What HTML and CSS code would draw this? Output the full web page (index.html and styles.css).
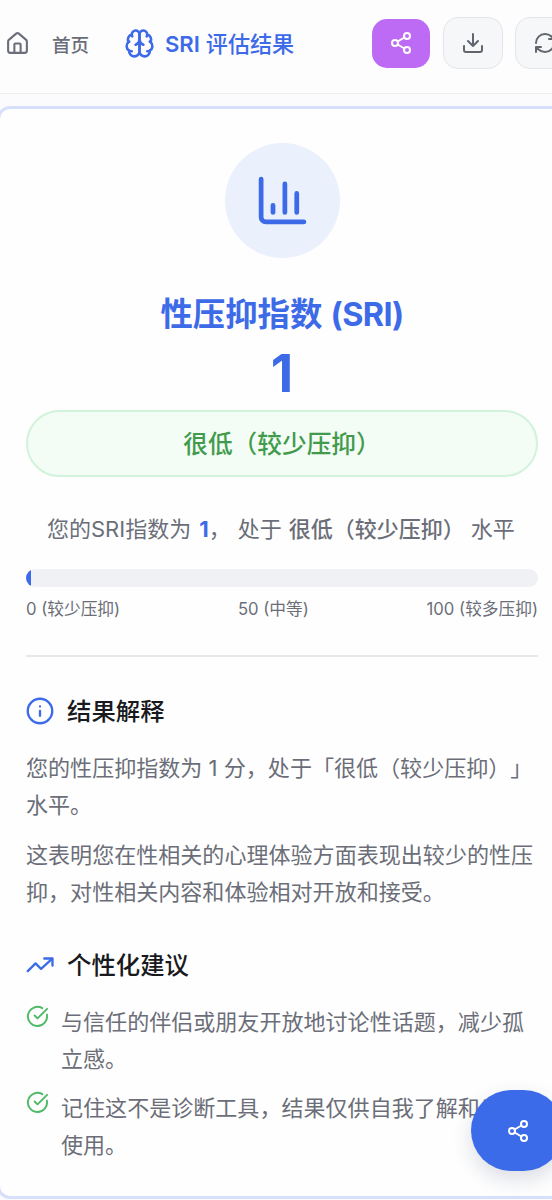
FILE: index.html
```html
<!DOCTYPE html>
<html lang="zh-CN">
<head>
<meta charset="utf-8">
<meta name="viewport" content="width=device-width, initial-scale=1">
<title>SRI 评估结果</title>
<link rel="stylesheet" href="styles.css">
</head>
<body>
<svg class="defs" aria-hidden="true">
  <symbol id="share" viewBox="0 0 24 24"><circle cx="18" cy="5" r="3"/><circle cx="6" cy="12" r="3"/><circle cx="18" cy="19" r="3"/><path d="m8.6 13.5 6.8 4M15.4 6.5l-6.8 4"/></symbol>
  <symbol id="check" viewBox="0 0 24 24"><path d="M21.8 10A10 10 0 1 1 17 3.3"/><path d="m9 11 3 3L22 4"/></symbol>
</svg>
<div class="page">
  <header class="topbar">
    <a class="home">
      <svg class="icon home-icon" viewBox="0 0 24 24"><path d="M15 21v-8a1 1 0 0 0-1-1h-4a1 1 0 0 0-1 1v8"/><path d="M3 10a2 2 0 0 1 .7-1.5l7-6a2 2 0 0 1 2.6 0l7 6A2 2 0 0 1 21 10v9a2 2 0 0 1-2 2H5a2 2 0 0 1-2-2z"/></svg>
      <span>首页</span>
    </a>
    <div class="brand">
      <svg class="icon brain-icon" viewBox="0 0 24 24"><path d="M12 5a3 3 0 1 0-5.997.125 4 4 0 0 0-2.526 5.77 4 4 0 0 0 .556 6.588A4 4 0 1 0 12 18Z"/><path d="M12 5a3 3 0 1 1 5.997.125 4 4 0 0 1 2.526 5.77 4 4 0 0 1-.556 6.588A4 4 0 1 1 12 18Z"/><path d="M15 13a4.5 4.5 0 0 1-3-4 4.5 4.5 0 0 1-3 4"/><path d="M17.599 6.5a3 3 0 0 0 .399-1.375M6.003 5.125A3 3 0 0 0 6.401 6.5M3.477 10.896a4 4 0 0 1 .585-.396M19.938 10.5a4 4 0 0 1 .585.396M6 18a4 4 0 0 1-1.967-.516M19.967 17.484A4 4 0 0 1 18 18"/></svg>
      <span class="brand-name"><span class="brand-abbr">SRI</span> 评估结果</span>
    </div>
    <div class="actions">
      <button class="btn btn-share"><svg class="icon"><use href="#share"/></svg></button>
      <button class="btn"><svg class="icon" viewBox="0 0 24 24"><path d="M21 15v4a2 2 0 0 1-2 2H5a2 2 0 0 1-2-2v-4M7 10l5 5 5-5M12 15V3"/></svg></button>
      <button class="btn"><svg class="icon" viewBox="0 0 24 24"><path d="M3 12a9 9 0 0 1 9-9 9.75 9.75 0 0 1 6.74 2.74L21 8M21 3v5h-5M21 12a9 9 0 0 1-9 9 9.75 9.75 0 0 1-6.74-2.74L3 16M8 16H3v5"/></svg></button>
    </div>
  </header>
  <main class="card">
    <div class="badge"><svg class="icon" viewBox="0 0 24 24"><path d="M3 3v16a2 2 0 0 0 2 2h16M18 17V9M13 17V5M8 17v-3"/></svg></div>
    <h1 class="title">性压抑指数 <span class="title-abbr">(SRI)</span></h1>
    <div class="score">1</div>
    <div class="level">很低（较少压抑）</div>
    <p class="summary"><span>您的SRI指数为</span><b class="value">1</b><span class="comma">，</span><span>处于</span><b class="level-name">很低（较少压抑）</b><span>水平</span></p>
    <div class="track"><div class="fill" style="width:1%"></div></div>
    <div class="scale"><span>0 (较少压抑)</span><span>50 (中等)</span><span>100 (较多压抑)</span></div>
    <section class="explain">
      <h2><svg class="icon" viewBox="0 0 24 24"><circle cx="12" cy="12" r="10.5"/><path d="M12 16v-4M12 8h.01"/></svg><span>结果解释</span></h2>
      <p>您的性压抑指数为 1 分，处于「很低（较少压抑）」<br>水平。</p>
      <p>这表明您在性相关的心理体验方面表现出较少的性压<br>抑，对性相关内容和体验相对开放和接受。</p>
    </section>
    <section class="advice">
      <h2><svg class="icon" viewBox="0 0 24 24"><path d="m1.500 17.200 6.700-6.600 4.700 4.700 9.400-8.600"/><path d="M15.700 6.400h7v6"/></svg><span>个性化建议</span></h2>
      <ul>
        <li><svg class="icon"><use href="#check"/></svg><span>与信任的伴侣或朋友开放地讨论性话题，减少孤<br>立感。</span></li>
        <li><svg class="icon"><use href="#check"/></svg><span>记住这不是诊断工具，结果仅供自我了解和反思<br>使用。</span></li>
      </ul>
    </section>
  </main>
  <button class="fab"><svg class="icon"><use href="#share"/></svg></button>
</div>
</body>
</html>
```
FILE: styles.css
```css
* { box-sizing: border-box; }
body { margin: 0; background: #fbfbfd; color: #6b6e78; font-family: Inter, "Noto Sans CJK SC", sans-serif; text-spacing-trim: space-all; }
h1, h2, p, ul { margin: 0; padding: 0; }
button { border: 0; padding: 0; font: inherit; color: inherit; }
.defs { display: none; }
.page { position: relative; width: 552px; height: 1200px; overflow: hidden; }
.icon { display: block; flex: none; fill: none; stroke: currentColor; stroke-width: 2; stroke-linecap: round; stroke-linejoin: round; }

.topbar { display: flex; align-items: center; height: 94px; padding: 0 0 7px 5px; background: #fdfdfe; border-bottom: 1px solid #eeeef1; white-space: nowrap; }
.home { display: flex; flex: none; align-items: center; gap: 22px; width: 119px; font-size: 18.600px; font-weight: 500; }
.home-icon { width: 25px; height: 25px; }
.brand { display: flex; flex: none; align-items: center; gap: 10px; width: 248px; color: #3d6be8; font-size: 22.100px; font-weight: 500; }
.brain-icon { width: 31px; height: 31px; }
.brand-name { padding-bottom: 2px; }
.brand-abbr { font-weight: 600; }
.actions { display: flex; flex: none; align-items: center; gap: 13px; }
.btn { display: flex; flex: none; align-items: center; justify-content: center; width: 60px; height: 52px; color: #62656d; background: #f6f7f9; border: 1.500px solid #e4e5ea; border-radius: 15px; }
.btn + .btn:last-child { margin-left: -1px; }
.btn .icon { width: 24px; height: 24px; }
.btn-share { width: 58px; height: 49px; background: #bd6bf5; border: 0; color: #fff; }

.card { width: 570px; height: 1093px; margin: 12px 0 0 -3px; padding: 34px 26px 0; background: #fefefe; border: 3px solid #d7e0fa; border-radius: 13px; }
.badge { display: flex; align-items: center; justify-content: center; width: 115px; height: 115px; margin: 0 auto; color: #3d6be8; background: #eaf0fc; border-radius: 50%; }
.badge .icon { width: 57px; height: 57px; }
.title { height: 48px; margin-top: 33px; color: #3d6be8; font-size: 32.400px; font-weight: 600; line-height: 48px; text-align: center; white-space: nowrap; }
.title-abbr { font-weight: 700; letter-spacing: -.6px; }
.score { height: 71px; color: #3d6be8; font-size: 52px; font-weight: 700; line-height: 70px; text-align: center; }
.level { height: 67px; color: #429b4c; background: #f3fcf5; border: 2px solid #d1f3db; border-radius: 34px; font-size: 24.700px; font-weight: 500; line-height: 65px; text-align: center; }
.summary { display: flex; height: 40px; margin: 32px 0 20px; padding-left: 21px; font-size: 22px; line-height: 41px; white-space: nowrap; }
.value { margin-left: 8px; color: #3d6be8; font-weight: 700; }
.comma { width: 29px; }
.level-name { margin: 0 6px 0 7px; font-weight: 500; }
.track { height: 18px; overflow: hidden; background: #f0f1f4; border-radius: 9px; }
.fill { height: 100%; background: #3d6be8; }
.scale { display: flex; justify-content: space-between; height: 26px; margin-top: 9px; font-size: 16.700px; line-height: 26px; }
.explain { margin-top: 33px; padding-top: 35px; border-top: 2px solid #e7e8eb; }
h2 { display: flex; align-items: center; gap: 13px; height: 38px; color: #181a20; font-size: 24.400px; font-weight: 500; line-height: 38px; white-space: nowrap; }
h2 .icon { width: 28px; height: 28px; color: #3d6be8; }
.explain p { margin-top: 12px; font-size: 22.050px; line-height: 37.400px; white-space: nowrap; }
.explain h2 + p { margin-top: 20px; }
.advice { margin-top: 34px; }
ul { list-style: none; padding-top: 20px; }
li { display: flex; gap: 12px; height: 74px; margin-bottom: 12px; font-size: 22.050px; line-height: 37px; white-space: nowrap; }
li .icon { width: 23px; height: 23px; margin-top: 1px; color: #4fba65; }
.fab { position: absolute; top: 1090px; left: 471px; display: flex; align-items: center; justify-content: center; width: 93px; height: 81px; color: #fff; background: #3b6be9; border-radius: 41px; box-shadow: 0 8px 20px rgba(30,50,90,.16); }
.fab .icon { width: 24px; height: 24px; }
```
